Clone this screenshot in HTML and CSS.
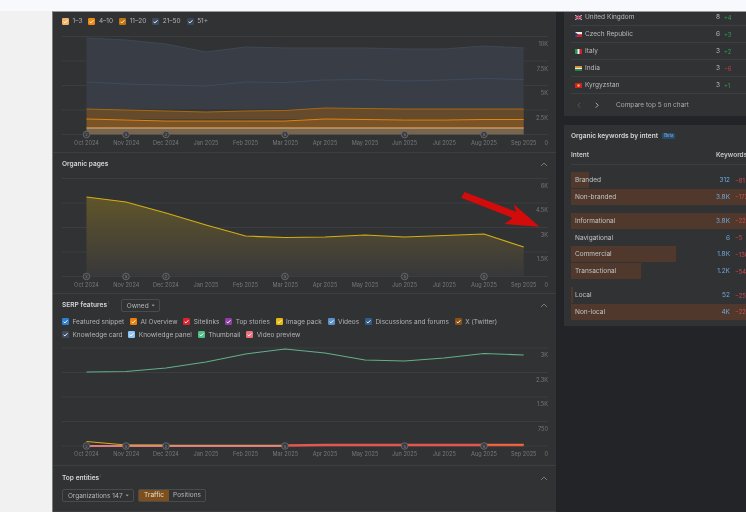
FILE: index.html
```html
<!DOCTYPE html>
<html lang="en">
<head>
<meta charset="utf-8">
<title>Organic research</title>
<link rel="stylesheet" href="styles.css">
</head>
<body>
<svg class="defs" width="0" height="0" aria-hidden="true"><defs>
<symbol id="chk" viewBox="0 0 7 7"><path d="M1.6 3.8 2.9 4.9 5.4 2.3" fill="none" stroke="#fff" stroke-width="1"/></symbol>
<symbol id="up" viewBox="0 0 8 5"><path d="M1 4 4 1 7 4" fill="none" stroke="#77787b" stroke-width="1"/></symbol>
<linearGradient id="gold" x1="0" y1="0" x2="0" y2="1"><stop offset="0" stop-color="#60552a"/><stop offset="1" stop-color="#38383a"/></linearGradient>
</defs></svg>
<div class="topbar"></div>
<div class="main">
  <div class="gutter"></div>
  <div class="app">
    <div class="leftcol">
      <section class="sec s1">
        <div class="legend">
          <span class="lg"><i class="cb c13"><svg><use href="#chk"/></svg></i>1–3</span>
          <span class="lg"><i class="cb c410"><svg><use href="#chk"/></svg></i>4–10</span>
          <span class="lg"><i class="cb c1120"><svg><use href="#chk"/></svg></i>11–20</span>
          <span class="lg"><i class="cb c2150"><svg><use href="#chk"/></svg></i>21–50</span>
          <span class="lg"><i class="cb c51"><svg><use href="#chk"/></svg></i>51+</span>
        </div>
        <svg class="chart h125" viewBox="53 27 503 125">
          <g class="grid"><path d="M62 36.5H548M62 61H548M62 85.5H548M62 110H548M62 134.5H548"/></g>
          <path fill="#383d46" d="M86.5 38 126 40 166 44 206 52 245.6 47 285 48 325 48 365 48 404.6 49 444 49 484 46 523.7 48V109H86.5Z"/>
          <path fill="none" stroke="#3d4856" d="M86.5 38 126 40 166 44 206 52 245.6 47 285 48 325 48 365 48 404.6 49 444 49 484 46 523.7 48"/>
          <path fill="none" stroke="#3f4c5c" d="M86.5 82 126 84 166 85 206 86 245.6 82 285 82.5 325 80 365 79.5 404.6 81 444 80 484 78.5 523.7 79.5"/>
          <path fill="#664a2c" d="M86.5 109 126 110 166 111 206 112 245.6 111 285 110.5 325 108 365 108.5 404.6 109 444 109 484 109 523.7 109V119.5H86.5Z"/>
          <path fill="#7a5326" d="M86.5 119 126 120 166 121 206 121 245.6 121 285 121 325 119 365 119.5 404.6 120 444 120 484 119.5 523.7 119.5V128H86.5Z"/>
          <path fill="#77654f" d="M86.5 128H523.7V134.5H86.5Z"/>
          <path fill="none" stroke="#a8690f" d="M86.5 109 126 110 166 111 206 112 245.6 111 285 110.5 325 108 365 108.5 404.6 109 444 109 484 109 523.7 109"/>
          <path fill="none" stroke="#e0860c" d="M86.5 119 126 120 166 121 206 121 245.6 121 285 121 325 119 365 119.5 404.6 120 444 120 484 119.5 523.7 119.5"/>
          <path fill="none" stroke="#f2b56e" d="M86.5 128H523.7"/>
          <g class="mk"><circle cx="86.5" cy="134.5" r="3.3"/><circle cx="126" cy="134.5" r="3.3"/><circle cx="166" cy="134.5" r="3.3"/><circle cx="285" cy="134.5" r="3.3"/><circle cx="404.6" cy="134.5" r="3.3"/><circle cx="484" cy="134.5" r="3.3"/></g>
          <g class="mkt"><text x="86.5" y="136">2</text><text x="126" y="136">5</text><text x="166" y="136">2</text><text x="285" y="136">5</text><text x="404.6" y="136">5</text><text x="484" y="136">5</text></g>
          <g class="ax"><text x="86.5" y="144.5">Oct 2024</text><text x="126.3" y="144.5">Nov 2024</text><text x="166" y="144.5">Dec 2024</text><text x="206" y="144.5">Jan 2025</text><text x="245.6" y="144.5">Feb 2025</text><text x="285.3" y="144.5">Mar 2025</text><text x="325" y="144.5">Apr 2025</text><text x="365" y="144.5">May 2025</text><text x="404.6" y="144.5">Jun 2025</text><text x="444.3" y="144.5">Jul 2025</text><text x="484" y="144.5">Aug 2025</text><text x="523.7" y="144.5">Sep 2025</text></g>
          <g class="ay"><text x="548" y="46">10K</text><text x="548" y="70.5">7.5K</text><text x="548" y="95">5K</text><text x="548" y="119.5">2.5K</text><text x="548" y="144.5">0</text></g>
        </svg>
      </section>

      <section class="sec s2">
        <header class="hd h20"><h2>Organic pages</h2><svg class="up"><use href="#up"/></svg></header>
        <svg class="chart h120" viewBox="53 173 503 120">
          <g class="grid"><path d="M62 178.5H548M62 203H548M62 227.5H548M62 252H548M62 276.5H548"/></g>
          <path fill="url(#gold)" d="M86.5 197 126 202 166 213 206 225 245.6 236 285 237.5 325 237 365 235 404.6 237 444 235.5 484 234 523.7 247V276H86.5Z"/>
          <path fill="none" stroke="#d4ae12" stroke-width="1.2" d="M86.5 197 126 202 166 213 206 225 245.6 236 285 237.5 325 237 365 235 404.6 237 444 235.5 484 234 523.7 247"/>
          <g class="mk"><circle cx="86.5" cy="276.5" r="3.3"/><circle cx="126" cy="276.5" r="3.3"/><circle cx="166" cy="276.5" r="3.3"/><circle cx="285" cy="276.5" r="3.3"/><circle cx="404.6" cy="276.5" r="3.3"/><circle cx="484" cy="276.5" r="3.3"/></g>
          <g class="mkt"><text x="86.5" y="278">2</text><text x="126" y="278">5</text><text x="166" y="278">2</text><text x="285" y="278">5</text><text x="404.6" y="278">5</text><text x="484" y="278">5</text></g>
          <g class="ax"><text x="86.5" y="286.5">Oct 2024</text><text x="126.3" y="286.5">Nov 2024</text><text x="166" y="286.5">Dec 2024</text><text x="206" y="286.5">Jan 2025</text><text x="245.6" y="286.5">Feb 2025</text><text x="285.3" y="286.5">Mar 2025</text><text x="325" y="286.5">Apr 2025</text><text x="365" y="286.5">May 2025</text><text x="404.6" y="286.5">Jun 2025</text><text x="444.3" y="286.5">Jul 2025</text><text x="484" y="286.5">Aug 2025</text><text x="523.7" y="286.5">Sep 2025</text></g>
          <g class="ay"><text x="548" y="187.5">6K</text><text x="548" y="212">4.5K</text><text x="548" y="236.5">3K</text><text x="548" y="261">1.5K</text><text x="548" y="286.5">0</text></g>
        </svg>
      </section>

      <section class="sec s3">
        <header class="hd h21"><h2>SERP features<sup>i</sup></h2><button class="btn owned">Owned <b class="caret"></b></button><svg class="up"><use href="#up"/></svg></header>
        <div class="legend row"><span class="lg"><i class="cb fs"><svg><use href="#chk"/></svg></i>Featured snippet</span><span class="lg"><i class="cb ai"><svg><use href="#chk"/></svg></i>AI Overview</span><span class="lg"><i class="cb sl"><svg><use href="#chk"/></svg></i>Sitelinks</span><span class="lg"><i class="cb ts"><svg><use href="#chk"/></svg></i>Top stories</span><span class="lg"><i class="cb ip"><svg><use href="#chk"/></svg></i>Image pack</span><span class="lg"><i class="cb vd"><svg><use href="#chk"/></svg></i>Videos</span><span class="lg"><i class="cb df"><svg><use href="#chk"/></svg></i>Discussions and forums</span><span class="lg"><i class="cb xt"><svg><use href="#chk"/></svg></i>X (Twitter)</span></div>
        <div class="legend row"><span class="lg"><i class="cb c2150"><svg><use href="#chk"/></svg></i>Knowledge card</span><span class="lg"><i class="cb kp"><svg><use href="#chk"/></svg></i>Knowledge panel</span><span class="lg"><i class="cb th"><svg><use href="#chk"/></svg></i>Thumbnail</span><span class="lg"><i class="cb vp"><svg><use href="#chk"/></svg></i>Video preview</span></div>
        <svg class="chart h124" viewBox="53 341 503 124">
          <g class="grid"><path d="M62 348H548M62 372.5H548M62 397H548M62 421.5H548M62 446H548"/></g>
          <path fill="none" stroke="#62b08a" stroke-width="1.1" d="M86.5 372 126 371.5 166 368 206 362 245.6 354 285 349 325 353 365 360 404.6 361 444 358 484 353.5 523.7 355"/>
          <path fill="none" stroke="#d4ae12" stroke-width="1.1" d="M86.5 441.5 126 445H166"/>
          <path fill="none" stroke="#e07a82" stroke-width="2" d="M86.5 446H285"/>
          <path fill="none" stroke="#d9a25a" stroke-width=".8" d="M126 445.2H285"/>
          <path fill="none" stroke="#e2574f" stroke-width="2.4" d="M285 445.5 325 445H404.6L523.7 445"/>
          <path fill="none" stroke="#f0702a" stroke-width="1" d="M484 444.5H523.7"/>
          <g class="mk"><circle cx="86.5" cy="446" r="3.3"/><circle cx="126" cy="446" r="3.3"/><circle cx="166" cy="446" r="3.3"/><circle cx="285" cy="446" r="3.3"/><circle cx="404.6" cy="446" r="3.3"/><circle cx="484" cy="446" r="3.3"/></g>
          <g class="mkt"><text x="86.5" y="447.5">2</text><text x="126" y="447.5">5</text><text x="166" y="447.5">2</text><text x="285" y="447.5">5</text><text x="404.6" y="447.5">5</text><text x="484" y="447.5">5</text></g>
          <g class="ax"><text x="86.5" y="455.5">Oct 2024</text><text x="126.3" y="455.5">Nov 2024</text><text x="166" y="455.5">Dec 2024</text><text x="206" y="455.5">Jan 2025</text><text x="245.6" y="455.5">Feb 2025</text><text x="285.3" y="455.5">Mar 2025</text><text x="325" y="455.5">Apr 2025</text><text x="365" y="455.5">May 2025</text><text x="404.6" y="455.5">Jun 2025</text><text x="444.3" y="455.5">Jul 2025</text><text x="484" y="455.5">Aug 2025</text><text x="523.7" y="455.5">Sep 2025</text></g>
          <g class="ay"><text x="548" y="357">3K</text><text x="548" y="381.5">2.3K</text><text x="548" y="406">1.5K</text><text x="548" y="430.5">750</text><text x="548" y="455.5">0</text></g>
        </svg>
      </section>

      <section class="sec s4">
        <header class="hd h23"><h2>Top entities<sup>i</sup></h2><svg class="up"><use href="#up"/></svg></header>
        <div class="controls">
          <button class="btn orgs">Organizations 147 <b class="caret"></b></button>
          <div class="toggle"><span class="on">Traffic</span><span>Positions</span></div>
        </div>
      </section>

      <svg class="arrow" viewBox="0 0 80 36" aria-hidden="true"><polygon points="3.5,0 55.2,19.7 52.5,12 78.5,34.7 43.5,32 51.8,26 .2,5.7"/></svg>
    </div>

    <div class="rightcol">
      <div class="card top">
        <div class="countries">
          <div class="crow"><svg class="flag" viewBox="0 0 7 5"><rect width="7" height="5" fill="#2a3a72"/><path d="M0 0 7 5M7 0 0 5" stroke="#ddd" stroke-width=".9"/><path d="M3.5 0V5M0 2.5H7" stroke="#d33" stroke-width="1.1"/></svg><span class="cname">United Kingdom</span><span class="num">8</span><span class="dl pos">+4</span></div>
          <div class="crow"><svg class="flag" viewBox="0 0 7 5"><rect width="7" height="2.5" fill="#eee"/><rect y="2.5" width="7" height="2.5" fill="#d0202a"/><path d="M0 0 3.2 2.5 0 5Z" fill="#1c3f7c"/></svg><span class="cname">Czech Republic</span><span class="num">6</span><span class="dl pos">+3</span></div>
          <div class="crow"><svg class="flag" viewBox="0 0 7 5"><rect width="2.4" height="5" fill="#1a9a4c"/><rect x="2.4" width="2.3" height="5" fill="#eee"/><rect x="4.7" width="2.3" height="5" fill="#d0202a"/></svg><span class="cname">Italy</span><span class="num">3</span><span class="dl pos">+2</span></div>
          <div class="crow"><svg class="flag" viewBox="0 0 7 5"><rect width="7" height="1.7" fill="#f08a24"/><rect y="1.7" width="7" height="1.6" fill="#eee"/><rect y="3.3" width="7" height="1.7" fill="#1e8a3c"/></svg><span class="cname">India</span><span class="num">3</span><span class="dl neg">−6</span></div>
          <div class="crow"><svg class="flag" viewBox="0 0 7 5"><rect width="7" height="5" fill="#d0202a"/><circle cx="3.5" cy="2.5" r="1.2" fill="#f3c21b"/></svg><span class="cname">Kyrgyzstan</span><span class="num">3</span><span class="dl pos">+1</span></div>
        </div>
        <div class="pager">
          <svg class="pg off" viewBox="0 0 5 8"><path d="M4 1 1 4 4 7"/></svg>
          <svg class="pg" viewBox="0 0 5 8"><path d="M1 1 4 4 1 7"/></svg>
          <span>Compare top 5 on chart</span>
        </div>
      </div>

      <div class="card intent">
        <div class="ititle"><h2>Organic keywords by intent</h2><span class="beta">Beta</span></div>
        <div class="ihead"><span class="ih1">Intent</span><span>Keywords</span></div>
        <div class="igroup">
          <div class="irow"><i class="bar" style="width:9%"></i><span class="iname">Branded</span><span class="ival">312</span><span class="idl">−81</span></div>
          <div class="irow"><i class="bar" style="width:100%"></i><span class="iname">Non-branded</span><span class="ival">3.8K</span><span class="idl">−172</span></div>
        </div>
        <div class="igroup">
          <div class="irow"><i class="bar" style="width:100%"></i><span class="iname">Informational</span><span class="ival">3.8K</span><span class="idl">−228</span></div>
          <div class="irow"><i class="bar" style="width:0"></i><span class="iname">Navigational</span><span class="ival">6</span><span class="idl">−5</span></div>
          <div class="irow"><i class="bar" style="width:51%"></i><span class="iname">Commercial</span><span class="ival">1.8K</span><span class="idl">−136</span></div>
          <div class="irow"><i class="bar" style="width:34%"></i><span class="iname">Transactional</span><span class="ival">1.2K</span><span class="idl">−54</span></div>
        </div>
        <div class="igroup">
          <div class="irow"><i class="bar" style="width:1%"></i><span class="iname">Local</span><span class="ival">52</span><span class="idl">−25</span></div>
          <div class="irow"><i class="bar" style="width:100%"></i><span class="iname">Non-local</span><span class="ival">4K</span><span class="idl">−228</span></div>
        </div>
      </div>
    </div>
  </div>
</div>
</body>
</html>
```
FILE: styles.css
```css
* { box-sizing: border-box; }
html, body { margin: 0; height: 512px; overflow: hidden; }
body { background: #f1f1f1; font-family: Inter, "Liberation Sans", sans-serif; font-size: 6.5px; color: #bcbdbf; }
.defs { position: absolute; }
.topbar { height: 11px; background: #f8f9fd; }
.main { display: flex; height: 501px; }
.gutter { width: 52px; background: #f1f1f1; }
.app { flex: 1; display: flex; background: #232427; border-top: 1px solid #9a9a9a; border-left: 1px solid #7c7c7c; overflow: hidden; filter: blur(.3px); }
.leftcol { position: relative; width: 503px; height: 500px; background: #313234; flex: none; }
.rightcol { margin-left: 8px; width: 182px; flex: none; display: flex; flex-direction: column; gap: 9px; }
.sec { border-bottom: 1px solid #3d3e41; }
.s4 { padding-bottom: 9px; }
.legend { display: flex; padding-left: 9px; align-items: center; }
.s1 .legend { height: 15px; padding-top: 3px; gap: 6px; }
.legend.row { height: 13px; gap: 5.75px; }
.lg { display: inline-flex; align-items: center; gap: 3.5px; white-space: nowrap; color: #b2b3b5; line-height: 10px; }
.cb { display: block; width: 7px; height: 7px; border-radius: 1.2px; }
.cb svg { display: block; width: 7px; height: 7px; }
.c13 { background: #f3b36a; } .c410 { background: #f0890f; } .c1120 { background: #c2740f; }
.c2150 { background: #3e4c60; } .c51 { background: #37465a; }
.fs { background: #2f7fd1; } .ai { background: #ee7d0b; } .sl { background: #d9252f; } .ts { background: #8e3fa3; }
.ip { background: #e6b80f; } .vd { background: #5b91c9; } .df { background: #2f5c8a; } .xt { background: #8a5014; }
.kp { background: #8fc6f5; } .th { background: #4fbf85; } .vp { background: #e8707a; }
.chart { display: block; width: 503px; }
.h125 { height: 125px; } .h120 { height: 120px; } .h124 { height: 124px; }
.grid path { stroke: #3c3d40; stroke-width: 1; fill: none; }
.ax text { font-size: 5.6px; fill: #77787b; text-anchor: middle; }
.ay text { font-size: 5.6px; fill: #77787b; text-anchor: end; }
.mk circle { fill: #3a3b3e; stroke: #6f7073; stroke-width: .8; }
.mkt text { font-size: 4px; fill: #88898c; text-anchor: middle; }
.hd { display: flex; align-items: center; padding: 2px 9px 0; position: relative; }
.h20 { height: 20px; } .h21 { height: 21px; } .h23 { height: 23px; }
h2 { margin: 0; font-size: 6.6px; font-weight: 600; color: #d4d5d7; white-space: nowrap; }
sup { font-size: 3.5px; font-weight: 400; color: #77787b; margin-left: 1px; }
.up { width: 8px; height: 5px; margin-left: auto; margin-right: -1px; }
.btn { font: inherit; color: #b5b6b8; background: transparent; border: 1px solid #4a4b4e; border-radius: 2px; height: 13px; padding: 0 4px; display: inline-flex; align-items: center; gap: 2px; white-space: nowrap; }
.owned { margin-left: 12px; width: 39px; justify-content: center; }
.orgs { width: 72px; justify-content: center; }
.caret { display: inline-block; width: 2.4px; height: 2.4px; border-right: .7px solid #999; border-bottom: .7px solid #999; transform: rotate(45deg); margin: -1px 0 0 1px; }
.controls { display: flex; padding-left: 9px; gap: 4px; }
.toggle { display: flex; height: 13px; border: 1px solid #4a4b4e; border-radius: 2px; width: 68px; line-height: 11px; }
.toggle span { flex: 1; text-align: center; color: #b5b6b8; white-space: nowrap; }
.toggle .on { flex: none; width: 30px; background: #7d4f1c; color: #e8dccb; }
.arrow { position: absolute; left: 408px; top: 180px; width: 80px; height: 36px; }
.arrow polygon { fill: #d40b0b; }
.card { background: #313234; overflow: hidden; }
.top { height: 104px; }
.countries { margin-top: -3px; padding-left: 7px; }
.crow { display: flex; align-items: center; height: 17px; padding-left: 4px; border-bottom: 1px solid #3d3e41; }
.flag { width: 7px; height: 5px; margin-right: 3px; flex: none; }
.cname { flex: 1; color: #b9babc; white-space: nowrap; }
.num { color: #b9babc; }
.dl { width: 22px; margin-left: 4px; font-size: 5.8px; }
.pos { color: #2f9e57; } .neg { color: #c8403f; }
.pager { display: flex; align-items: center; height: 22px; padding-left: 13px; color: #a9aaad; }
.pg { width: 4px; height: 6.5px; margin-right: 14px; fill: none; stroke: #c9cacc; stroke-width: 1; }
.pg.off { stroke: #616265; }
.pg + .pg { margin-right: 17px; }
.intent { height: 201px; padding: 0 0 0 7px; }
.ititle { display: flex; align-items: center; height: 21px; }
.beta { margin-left: 4px; background: #2a4a68; color: #7fb4e6; font-size: 4.4px; line-height: 6px; padding: 0 2px; border-radius: 1px; }
.ihead { display: flex; align-items: center; height: 19px; width: 205px; border-bottom: 1px solid #3d3e41; font-weight: 600; color: #c6c7c9; }
.ih1 { width: 145px; }
.igroup { width: 205px; margin-top: 8px; display: flex; flex-direction: column; gap: .75px; }
.igroup:nth-child(3) { margin-top: 7px; }
.irow { position: relative; display: flex; align-items: center; height: 16px; padding-left: 4px; }
.bar { position: absolute; left: 0; top: 0; bottom: 0; background: #50392c; }
.iname { position: relative; flex: 1; color: #c3c4c6; }
.ival { position: relative; color: #6ea8dc; }
.idl { position: relative; width: 41px; margin-left: 5px; color: #cf4a48; font-size: 5.8px; }
```
